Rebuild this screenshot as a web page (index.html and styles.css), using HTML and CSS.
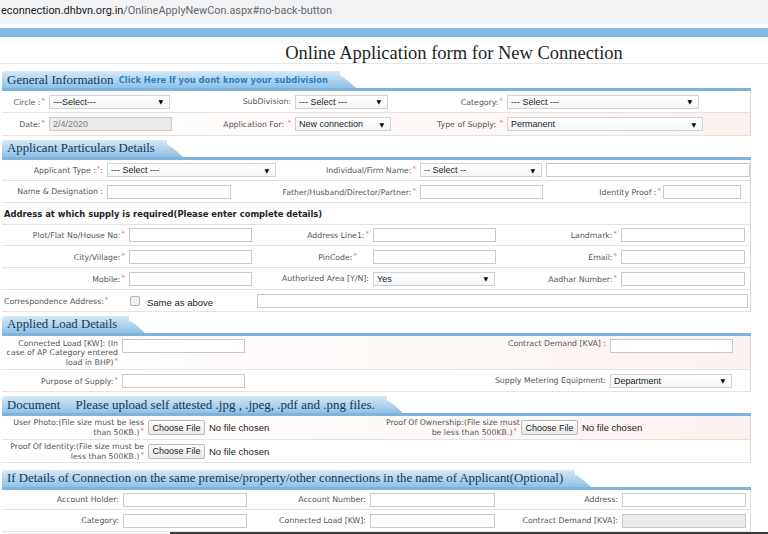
FILE: index.html
```html
<!DOCTYPE html>
<html lang="en">
<head>
<meta charset="utf-8">
<title>Online Application form for New Connection</title>
<link rel="stylesheet" href="styles.css">
</head>
<body>
<div class="urlbar"><span class="host">econnection.dhbvn.org.in</span>/OnlineApplyNewCon.aspx#no-back-button</div>
<div class="band"></div>
<h1 class="title">Online Application form for New Connection</h1>

<section class="sec sec-gen">
  <div class="tabrow"><h2 class="tab tab-gen">General Information <a class="tablink">Click Here If you dont know your subdivision</a></h2></div>
  <div class="rows">
    <div class="row g-gen h22">
      <label class="lb">Circle :<i>*</i></label>
      <div class="fd"><div class="sel w121"><span>---Select---</span><b>▼</b></div></div>
      <label class="lb">SubDivision:</label>
      <div class="fd"><div class="sel w93"><span>--- Select ---</span><b>▼</b></div></div>
      <label class="lb">Category:<i>*</i></label>
      <div class="fd"><div class="sel w192"><span>--- Select ---</span><b>▼</b></div></div>
    </div>
    <div class="row g-gen h23 tint">
      <label class="lb">Date:<i>*</i></label>
      <div class="fd"><input class="inp dis w123" type="text" value="2/4/2020" disabled></div>
      <label class="lb">Application For: <i>*</i></label>
      <div class="fd"><div class="sel w96"><span>New connection</span><b>▼</b></div></div>
      <label class="lb">Type of Supply: <i>*</i></label>
      <div class="fd"><div class="sel w196"><span>Permanent</span><b>▼</b></div></div>
    </div>
  </div>
</section>

<section class="sec sec-app">
  <div class="tabrow"><h2 class="tab tab-app">Applicant Particulars Details</h2></div>
  <div class="rows">
    <div class="row g-app h21">
      <label class="lb">Applicant Type :<i>*</i>:</label>
      <div class="fd"><div class="sel w169"><span>--- Select ---</span><b>▼</b></div></div>
      <label class="lb">Individual/Firm Name:<i>*</i></label>
      <div class="fd"><div class="sel w122"><span>-- Select --</span><b>▼</b></div></div>
      <div class="fd"><input class="inp w204" type="text"></div>
    </div>
    <div class="row g-app h22">
      <label class="lb">Name &amp; Designation :</label>
      <div class="fd"><input class="inp w124" type="text"></div>
      <label class="lb">Father/Husband/Director/Partner:<i>*</i></label>
      <div class="fd"><input class="inp w123" type="text"></div>
      <div class="fd pair"><label class="lb">Identity Proof :<i>*</i></label><input class="inp w78" type="text"></div>
    </div>
    <div class="row h22">
      <h3 class="addr-h">Address at which supply is required(Please enter complete details)</h3>
    </div>
    <div class="row g-addr h21">
      <label class="lb">Plot/Flat No/House No:<i>*</i></label>
      <div class="fd"><input class="inp w123" type="text"></div>
      <label class="lb">Address Line1:<i>*</i></label>
      <div class="fd"><input class="inp w123" type="text"></div>
      <label class="lb">Landmark:<i>*</i></label>
      <div class="fd"><input class="inp w124" type="text"></div>
    </div>
    <div class="row g-addr h22">
      <label class="lb">City/Village:<i>*</i></label>
      <div class="fd"><input class="inp w123" type="text"></div>
      <label class="lb">PinCode:<i>*</i><span class="sp"></span></label>
      <div class="fd"><input class="inp w123" type="text"></div>
      <label class="lb">Email:<i>*</i></label>
      <div class="fd"><input class="inp w124" type="text"></div>
    </div>
    <div class="row g-addr h22">
      <label class="lb">Mobile:<i>*</i></label>
      <div class="fd"><input class="inp w123" type="text"></div>
      <label class="lb">Authorized Area [Y/N]:</label>
      <div class="fd"><div class="sel w122"><span>Yes</span><b>▼</b></div></div>
      <label class="lb">Aadhar Number:<i>*</i></label>
      <div class="fd"><input class="inp w124" type="text"></div>
    </div>
    <div class="row g-addr h22">
      <label class="lb lb-left">Correspondence Address:<i>*</i></label>
      <div class="fd"><span class="chk"></span><span class="chk-text">Same as above</span></div>
      <div class="fd span4"><input class="inp w493" type="text"></div>
    </div>
  </div>
</section>

<section class="sec sec-load">
  <div class="tabrow"><h2 class="tab tab-load">Applied Load Details</h2></div>
  <div class="rows">
    <div class="row g-load h34 tint">
      <label class="lb lb-top">Connected Load [KW]: (In<br>case of AP Category entered<br>load in BHP)<i>*</i></label>
      <div class="fd fd-top"><input class="inp w123" type="text"></div>
      <label class="lb lb-top">Contract Demand [KVA] :</label>
      <div class="fd fd-top"><input class="inp w123" type="text"></div>
    </div>
    <div class="row g-load h22">
      <label class="lb">Purpose of Supply:<i>*</i></label>
      <div class="fd"><input class="inp w123" type="text"></div>
      <label class="lb">Supply Metering Equipment:</label>
      <div class="fd"><div class="sel w122"><span>Department</span><b>▼</b></div></div>
    </div>
  </div>
</section>

<section class="sec sec-doc">
  <div class="tabrow"><h2 class="tab tab-doc">Document <span class="tab-note">Please upload self attested .jpg , .jpeg, .pdf and .png files.</span></h2></div>
  <div class="rows">
    <div class="row g-doc h24 tint">
      <label class="lb">User Photo:(File size must be less<br>than 50KB.)<i>*</i></label>
      <div class="fd"><button class="btn" type="button">Choose File</button><span class="nofile">No file chosen</span></div>
      <label class="lb">Proof Of Ownership:(File size must<br>be less than 500KB.)<i>*</i></label>
      <div class="fd"><button class="btn" type="button">Choose File</button><span class="nofile">No file chosen</span></div>
    </div>
    <div class="row g-doc h23">
      <label class="lb">Proof Of Identity:(File size must be<br>less than 500KB.)<i>*</i></label>
      <div class="fd"><button class="btn" type="button">Choose File</button><span class="nofile">No file chosen</span></div>
    </div>
  </div>
</section>

<section class="sec sec-prev">
  <div class="tabrow"><h2 class="tab tab-prev">If Details of Connection on the same premise/property/other connections in the name of Applicant(Optional)</h2></div>
  <div class="rows">
    <div class="row g-prev h20">
      <label class="lb">Account Holder:</label>
      <div class="fd"><input class="inp w124" type="text"></div>
      <label class="lb">Account Number:</label>
      <div class="fd"><input class="inp w125" type="text"></div>
      <label class="lb">Address:</label>
      <div class="fd"><input class="inp w124" type="text"></div>
    </div>
    <div class="row g-prev h22">
      <label class="lb">Category:</label>
      <div class="fd"><input class="inp w124" type="text"></div>
      <label class="lb">Connected Load [KW]:</label>
      <div class="fd"><input class="inp w125" type="text"></div>
      <label class="lb">Contract Demand [KVA]:</label>
      <div class="fd"><input class="inp dis w124" type="text" disabled></div>
    </div>
  </div>
</section>
<div class="edge"></div>
</body>
</html>
```

FILE: styles.css
```css
* { box-sizing: border-box; }

body {
  margin: 0;
  width: 768px;
  height: 534px;
  overflow: hidden;
  background: #fff;
  font-family: "DejaVu Sans", sans-serif;
  color: #555;
}

/* browser address bar */
.urlbar {
  height: 24px;
  background: #f1f2f3;
  font: 10.9px/22px Roboto, "Liberation Sans", sans-serif;
  color: #66696d;
  white-space: nowrap;
  padding-left: 1px;
}
.host { color: #202124; }

.band {
  height: 13px;
  border-top: 4px solid #fafbfc;
  background: #82b8e2;
}

.title {
  margin: 0;
  height: 27px;
  padding: 6px 0 0 140px;
  border-bottom: 1px solid #e6e6e6;
  font: normal 18.5px/21px "Liberation Serif", serif;
  color: #1f1f1f;
  text-align: center;
  background: linear-gradient(#f6f8fa, #fff 40%);
}

/* sections */
.sec { margin: 4px 17px 0 2px; }
.sec-gen { margin-top: 7px; }
.sec-prev { margin-top: 7px; }

.tabrow {
  display: flex;
  height: 20px;
  border-bottom: 3px solid #7db4de;
}

.tab {
  position: relative;
  z-index: 0;
  height: 17px;
  margin: 0;
  padding: 0 12px 0 5px;
  font: normal 12.8px/17px "Liberation Serif", serif;
  color: #1a3658;
  white-space: nowrap;
  background: linear-gradient(#d6e9f7, #8ec0e7);
  border-top-left-radius: 3px;
}
.tab::after {
  content: "";
  position: absolute;
  z-index: -1;
  top: 0;
  right: -16px;
  width: 30px;
  height: 17px;
  background: linear-gradient(#d6e9f7, #8ec0e7);
  transform: skewX(48deg);
  transform-origin: 0 100%;
  border-top-right-radius: 10px;
}
.tab-gen { font-size: 13px; }
.tablink {
  margin-left: 2px;
  font: bold 8.3px "DejaVu Sans", sans-serif;
  color: #2d7fc2;
  vertical-align: 1px;
}
.tab-note { margin-left: 12px; font-size: 13px; }

.rows {
  border-right: 1px solid #d9d9d9;
}

.row {
  display: grid;
  align-items: center;
  border-bottom: 1px solid #e3e3e3;
}
.tint { background: linear-gradient(90deg, #fff, #fcf3f0); }

.h20 { height: 20px; }
.h21 { height: 21px; }
.h22 { height: 22px; }
.h23 { height: 23px; }
.h24 { height: 24px; }
.h34 { height: 34px; }

.g-gen  { grid-template-columns: 45px 128px 118px 102px 110px 205px 1fr; }
.g-app  { grid-template-columns: 103px 175px 138px 126px 1fr; }
.g-addr { grid-template-columns: 125px 128px 116px 129px 119px 1fr; }
.g-load { grid-template-columns: 118px 130px 358px 1fr; }
.g-doc  { grid-template-columns: 144px 240px 133px 1fr; }
.g-prev { grid-template-columns: 119px 129px 118px 132px 120px 1fr; }

/* labels */
.lb {
  font-size: 7.8px;
  line-height: 9px;
  color: #555;
  text-align: right;
  padding-right: 2px;
  white-space: nowrap;
}
.lb i {
  font-style: normal;
  color: #e8707a;
  font-size: 7px;
  vertical-align: 2px;
  margin-left: 1px;
}
.lb-left { text-align: left; padding-left: 2px; }
.lb-top { align-self: start; padding-top: 3px; }
.sp { display: inline-block; width: 12px; }

.fd {
  display: flex;
  align-items: center;
  padding-left: 2px;
}
.fd-top { align-self: start; padding-top: 3px; }
.pair { justify-content: flex-end; padding-right: 9px; }
.span4 { grid-column: 3 / 7; }

.addr-h {
  grid-column: 1 / -1;
  margin: 0;
  padding-left: 2px;
  font: bold 8.4px "DejaVu Sans", sans-serif;
  color: #222;
}

/* controls */
.inp {
  height: 14px;
  margin: 0;
  padding: 0 3px;
  border: 1px solid #c9c9c9;
  border-radius: 0;
  background: #fff;
  font: 9px "Liberation Sans", sans-serif;
  color: #555;
  outline: none;
}
.dis { background: #ebebeb; color: #808080; }

.sel {
  height: 14px;
  display: flex;
  align-items: center;
  justify-content: space-between;
  padding: 0 6px 0 3px;
  border: 1px solid #cfd2d5;
  background: linear-gradient(#fff, #f3f6f9);
  font: 9px "Liberation Sans", sans-serif;
  color: #222;
  white-space: nowrap;
}
.sel b {
  font: 6px "DejaVu Sans", sans-serif;
  color: #000;
}

.btn {
  width: 57px;
  height: 15px;
  margin: 0;
  padding: 0;
  border: 1px solid #b9b9b9;
  border-radius: 2px;
  background: linear-gradient(#fdfdfd, #e9e9e9);
  font: 9px "Liberation Sans", sans-serif;
  color: #222;
}
.nofile {
  margin-left: 4px;
  font: 9.5px "Liberation Sans", sans-serif;
  color: #222;
}

.chk {
  width: 10px;
  height: 10px;
  margin-left: 1px;
  border: 1px solid #b3b3b3;
  border-radius: 2px;
  background: #efefef;
}
.chk-text {
  margin-left: 7px;
  font: 9.5px "Liberation Sans", sans-serif;
  color: #222;
  padding-top: 3px;
}

.w78 { width: 78px; }
.w93 { width: 93px; }
.w96 { width: 96px; }
.w121 { width: 121px; }
.w122 { width: 122px; }
.w123 { width: 123px; }
.w124 { width: 124px; }
.w125 { width: 125px; }
.w169 { width: 169px; }
.w192 { width: 192px; }
.w196 { width: 196px; }
.w204 { width: 204px; }
.w493 { width: 491px; }

.edge {
  height: 2px;
  margin-left: 170px;
  background: #3b3b3b;
}
```
